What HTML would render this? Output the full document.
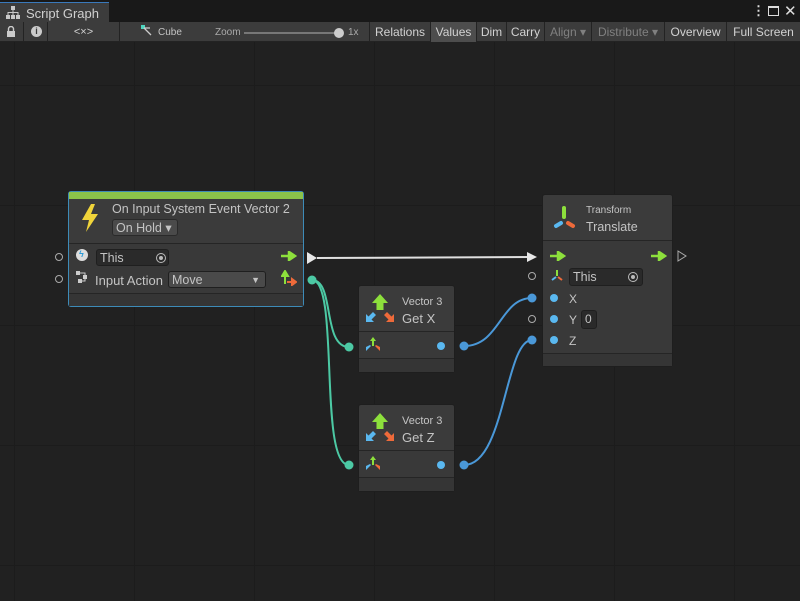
<!DOCTYPE html>
<html><head><meta charset="utf-8"><style>
*{margin:0;padding:0;box-sizing:border-box}
body{width:800px;height:601px;overflow:hidden;background:#212121;font-family:"Liberation Sans",sans-serif;position:relative;color:#c8c8c8}
.a{position:absolute}
.tb{font-size:12px;color:#d2d2d2;top:22px;height:20px;line-height:21px;text-align:center;border-right:1px solid #232323}
.node{position:absolute;background:#393939;border-radius:3px;border:1px solid #1e1e1e}
.hd{position:absolute;left:0;right:0;background:#3b3b3b;border-bottom:1px solid #252525}
.ft{position:absolute;left:0;right:0;bottom:0;border-top:1px solid #252525;background:#353535}
.fld{position:absolute;background:#2a2a2a;border:1px solid #1f1f1f;border-radius:3px;color:#c4c4c4;font-size:12px;padding-left:3px;line-height:16px}
.t{position:absolute;font-size:12px;color:#c4c4c4;white-space:nowrap}
.ring{position:absolute;width:8px;height:8px;border:1px solid #aaa;border-radius:50%}
.dot{position:absolute;width:8px;height:8px;border-radius:50%}
</style></head><body>
<svg class="a" style="left:0;top:42px" width="800" height="559">
<g stroke="#1c1c1c" stroke-width="1">
<line x1="14.5" y1="0" x2="14.5" y2="559"/><line x1="134.5" y1="0" x2="134.5" y2="559"/><line x1="254.5" y1="0" x2="254.5" y2="559"/><line x1="374.5" y1="0" x2="374.5" y2="559"/><line x1="494.5" y1="0" x2="494.5" y2="559"/><line x1="614.5" y1="0" x2="614.5" y2="559"/><line x1="734.5" y1="0" x2="734.5" y2="559"/>
<line x1="0" y1="43.5" x2="800" y2="43.5"/><line x1="0" y1="163.5" x2="800" y2="163.5"/><line x1="0" y1="283.5" x2="800" y2="283.5"/><line x1="0" y1="403.5" x2="800" y2="403.5"/><line x1="0" y1="523.5" x2="800" y2="523.5"/>
</g></svg>
<div class="a" style="left:0;top:0;width:800px;height:22px;background:#191919"></div>
<div class="a" style="left:0;top:2px;width:109px;height:20px;background:#3c3c3c;border-top:1px solid #3a79bb"></div>
<svg class="a" style="left:6px;top:6px" width="14" height="13"><g fill="#c8c8c8"><rect x="5" y="0" width="4" height="4"/><rect x="6.5" y="4" width="1" height="3"/><rect x="1.5" y="6" width="11" height="1"/><rect x="1.5" y="6" width="1" height="3"/><rect x="11.5" y="6" width="1" height="3"/><rect x="6.5" y="6" width="1" height="3"/><rect x="0" y="9" width="4" height="4"/><rect x="5" y="9" width="4" height="4"/><rect x="10" y="9" width="4" height="4"/></g></svg>
<div class="t" style="left:26px;top:6px;font-size:13px;color:#d0d0d0">Script Graph</div>
<div class="t" style="left:752px;top:3px;font-size:13px;color:#ddd;font-weight:bold">⋮</div>
<div class="a" style="left:768px;top:6px;width:11px;height:10px;border:1px solid #ddd;border-top-width:2px"></div>
<div class="t" style="left:784px;top:2px;font-size:15px;color:#ddd">✕</div>
<div class="a" style="left:0;top:22px;width:800px;height:20px;background:#3c3c3c;border-bottom:1px solid #232323"></div>
<div class="a" style="left:0;top:22px;width:24px;height:20px;border-right:1px solid #232323"></div>
<svg class="a" style="left:6px;top:26px" width="10" height="12"><rect x="1" y="5" width="8" height="6" fill="#ccc"/><path d="M2.5 5V3a2.5 2.5 0 0 1 5 0v2" stroke="#ccc" fill="none" stroke-width="1.4"/></svg>
<div class="a" style="left:24px;top:22px;width:24px;height:20px;border-right:1px solid #232323"></div>
<div class="a" style="left:31px;top:26px;width:11px;height:11px;border-radius:50%;background:#ccc;color:#3c3c3c;font-size:9px;font-weight:bold;text-align:center;line-height:11px">i</div>
<div class="a tb" style="left:48px;width:72px;font-size:11px">&lt;×&gt;</div>
<div class="a" style="left:120px;top:22px;width:250px;height:20px;border-right:1px solid #232323"></div>
<svg class="a" style="left:141px;top:25px" width="12" height="12"><rect x="0" y="0" width="4" height="4" fill="#4fd6c0"/><path d="M3 3L10 10M3 3L9 3" stroke="#ccc" stroke-width="1.3"/></svg>
<div class="t" style="left:158px;top:27px;font-size:10px">Cube</div>
<div class="t" style="left:215px;top:27px;font-size:10px;color:#aaa">Zoom</div>
<div class="a" style="left:244px;top:32px;width:96px;height:2px;background:#777"></div>
<div class="a" style="left:334px;top:28px;width:10px;height:10px;border-radius:50%;background:#ccc"></div>
<div class="t" style="left:348px;top:27px;font-size:10px;color:#aaa">1x</div>
<div class="a tb" style="left:370px;width:61px">Relations</div>
<div class="a tb" style="left:431px;width:46px;background:#4d4d4d">Values</div>
<div class="a tb" style="left:477px;width:30px">Dim</div>
<div class="a tb" style="left:507px;width:38px">Carry</div>
<div class="a tb" style="left:545px;width:47px;color:#808080">Align ▾</div>
<div class="a tb" style="left:592px;width:73px;color:#808080">Distribute ▾</div>
<div class="a tb" style="left:665px;width:62px">Overview</div>
<div class="a tb" style="left:727px;width:73px;border:none">Full Screen</div>

<svg class="a" style="left:0;top:0" width="800" height="601">
<g fill="none" stroke-width="2">
<path d="M317 258 L532 257" stroke="#e0e0e0"/>
<path d="M312 280 C335 280 322 347 349 347" stroke="#4cc9a4"/>
<path d="M312 280 C340 280 318 465 349 465" stroke="#4cc9a4"/>
<path d="M464 346 C500 346 500 298 532 298" stroke="#4a98d8"/>
<path d="M464 465 C505 465 505 340 532 340" stroke="#4a98d8"/>
</g>
<path d="M307 252 L317 258 L307 264Z" fill="#e8e8e8"/>
<path d="M527 252 L537 257 L527 262Z" fill="#e8e8e8"/>
<circle cx="312" cy="280" r="4.5" fill="#4cc9a4"/>
<circle cx="349" cy="347" r="4.5" fill="#4cc9a4"/>
<circle cx="349" cy="465" r="4.5" fill="#4cc9a4"/>
<circle cx="464" cy="346" r="4.5" fill="#4a98d8"/>
<circle cx="464" cy="465" r="4.5" fill="#4a98d8"/>
<circle cx="532" cy="298" r="4.5" fill="#4a98d8"/>
<circle cx="532" cy="340" r="4.5" fill="#4a98d8"/>
<path d="M678 251 L686 256 L678 261Z" fill="none" stroke="#aaa"/>
</svg>

<div class="node" style="left:68px;top:191px;width:236px;height:116px;border-color:#3d8bb8">
 <div class="a" style="left:0;top:0;right:0;height:7px;background:#8bc34a"></div>
 <div class="hd" style="top:7px;height:45px"></div>
 <svg class="a" style="left:11px;top:12px" width="20" height="28"><path d="M11 0L2 16H9L6 28L18 10H11L15 0Z" fill="#f0d43a"/></svg>
 <div class="t" style="left:43px;top:10px;font-size:12.5px">On Input System Event Vector 2</div>
 <div class="fld" style="left:43px;top:27px;width:66px;height:17px;background:#4a4a4a;border-color:#2a2a2a;font-size:12.5px">On Hold ▾</div>
 <div class="a" style="left:7px;top:57px;width:12px;height:12px;border-radius:50%;background:#ddd"></div>
 <div class="t" style="left:10px;top:57px;font-size:9px;color:#2a9ad8;font-weight:bold">ϟ</div>
 <div class="fld" style="left:27px;top:57px;width:73px;height:17px;font-size:12.5px">This</div>
 <div class="a" style="left:87px;top:61px;width:10px;height:10px;border:1px solid #bbb;border-radius:50%"></div>
 <div class="a" style="left:90px;top:64px;width:4px;height:4px;background:#bbb;border-radius:50%"></div>
 <svg class="a" style="left:6px;top:78px" width="14" height="14"><g fill="#ccc"><rect x="1" y="1" width="4" height="4"/><rect x="8" y="5" width="4" height="4"/><rect x="3" y="9" width="4" height="4"/></g><path d="M5 3H10V5M10 9V11H7" stroke="#ccc" fill="none"/></svg>
 <div class="t" style="left:26px;top:81px;font-size:13px">Input Action</div>
 <div class="fld" style="left:99px;top:79px;width:98px;height:17px;background:#4a4a4a;font-size:12.5px">Move<span style="position:absolute;right:5px;font-size:9px">▼</span></div>
 <svg class="a" style="left:212px;top:59px" width="16" height="10"><path d="M0 5H9M8 1L14 5L8 9Z" stroke="#8de03c" stroke-width="2.5" fill="#8de03c"/></svg>
 <svg class="a" style="left:212px;top:78px" width="16" height="16"><path d="M4 14V4M1 6L4 1L7 6Z" stroke="#8de03c" stroke-width="2" fill="#8de03c"/><path d="M6 12H12M11 9L15 12L11 15Z" stroke="#ee6a3a" stroke-width="2" fill="#ee6a3a"/></svg>
 <div class="ft" style="height:13px"></div>
</div>
<div class="ring" style="left:55px;top:253px"></div>
<div class="ring" style="left:55px;top:275px"></div>

<div class="node" style="left:542px;top:194px;width:131px;height:173px">
 <div class="hd" style="top:0;height:46px;border-radius:3px 3px 0 0"></div>
 <svg class="a" style="left:8px;top:10px" width="28" height="28"><path d="M13 3V12" stroke="#8de03c" stroke-width="4" stroke-linecap="round"/><path d="M5 21L10 18" stroke="#5ab8f0" stroke-width="4" stroke-linecap="round"/><path d="M17 18L22 21" stroke="#ee6a3a" stroke-width="4" stroke-linecap="round"/></svg>
 <div class="t" style="left:43px;top:10px;font-size:10px">Transform</div>
 <div class="t" style="left:43px;top:25px;font-size:12.5px">Translate</div>
 <svg class="a" style="left:7px;top:56px" width="16" height="10"><path d="M0 5H9M8 1L14 5L8 9Z" stroke="#8de03c" stroke-width="2.5" fill="#8de03c"/></svg>
 <svg class="a" style="left:108px;top:56px" width="16" height="10"><path d="M0 5H9M8 1L14 5L8 9Z" stroke="#8de03c" stroke-width="2.5" fill="#8de03c"/></svg>
 <svg class="a" style="left:7px;top:74px" width="14" height="14"><path d="M7 1V7" stroke="#8de03c" stroke-width="2"/><path d="M2 11L6 8" stroke="#5ab8f0" stroke-width="2"/><path d="M8 8L12 11" stroke="#ee6a3a" stroke-width="2"/></svg>
 <div class="fld" style="left:26px;top:73px;width:74px;height:18px;line-height:17px;font-size:12.5px">This</div>
 <div class="a" style="left:85px;top:77px;width:10px;height:10px;border:1px solid #bbb;border-radius:50%"></div>
 <div class="a" style="left:88px;top:80px;width:4px;height:4px;background:#bbb;border-radius:50%"></div>
 <div class="dot" style="left:7px;top:99px;background:#5ab8f0"></div><div class="t" style="left:26px;top:97px">X</div>
 <div class="dot" style="left:7px;top:120px;background:#5ab8f0"></div><div class="t" style="left:26px;top:118px">Y</div>
 <div class="fld" style="left:38px;top:115px;width:16px;height:19px;line-height:17px">0</div>
 <div class="dot" style="left:7px;top:141px;background:#5ab8f0"></div><div class="t" style="left:26px;top:139px">Z</div>
 <div class="ft" style="height:13px"></div>
</div>
<div class="ring" style="left:528px;top:272px"></div>
<div class="ring" style="left:528px;top:315px"></div>

<div class="node" style="left:358px;top:285px;width:97px;height:88px">
 <div class="hd" style="top:0;height:46px;border-radius:3px 3px 0 0"></div>
 <svg class="a" style="left:5px;top:7px" width="32" height="34"><path d="M16 1L8 10H12.5V17H19.5V10H24Z" fill="#8de03c"/><path d="M2 29L2 21L4.5 23.5L9 19L12 22L7.5 26.5L10 29Z" fill="#5ab8f0"/><path d="M30 29L30 21L27.5 23.5L23 19L20 22L24.5 26.5L22 29Z" fill="#ee6a3a"/></svg>
 <div class="t" style="left:43px;top:10px;font-size:11px">Vector 3</div>
 <div class="t" style="left:43px;top:25px;font-size:13px">Get X</div>
 <svg class="a" style="left:6px;top:50px" width="16" height="16"><path d="M8 1L5 5H7V10H9V5H11Z" fill="#8de03c"/><path d="M1 15V11L5 9L6 10L3 13Z" fill="#5ab8f0"/><path d="M15 15V11L11 9L10 10L13 13Z" fill="#ee6a3a"/></svg>
 <div class="dot" style="left:78px;top:56px;background:#5ab8f0"></div>
 <div class="ft" style="height:14px"></div>
</div>
<div class="node" style="left:358px;top:404px;width:97px;height:88px">
 <div class="hd" style="top:0;height:46px;border-radius:3px 3px 0 0"></div>
 <svg class="a" style="left:5px;top:7px" width="32" height="34"><path d="M16 1L8 10H12.5V17H19.5V10H24Z" fill="#8de03c"/><path d="M2 29L2 21L4.5 23.5L9 19L12 22L7.5 26.5L10 29Z" fill="#5ab8f0"/><path d="M30 29L30 21L27.5 23.5L23 19L20 22L24.5 26.5L22 29Z" fill="#ee6a3a"/></svg>
 <div class="t" style="left:43px;top:10px;font-size:11px">Vector 3</div>
 <div class="t" style="left:43px;top:25px;font-size:13px">Get Z</div>
 <svg class="a" style="left:6px;top:50px" width="16" height="16"><path d="M8 1L5 5H7V10H9V5H11Z" fill="#8de03c"/><path d="M1 15V11L5 9L6 10L3 13Z" fill="#5ab8f0"/><path d="M15 15V11L11 9L10 10L13 13Z" fill="#ee6a3a"/></svg>
 <div class="dot" style="left:78px;top:56px;background:#5ab8f0"></div>
 <div class="ft" style="height:14px"></div>
</div>
</body></html>
